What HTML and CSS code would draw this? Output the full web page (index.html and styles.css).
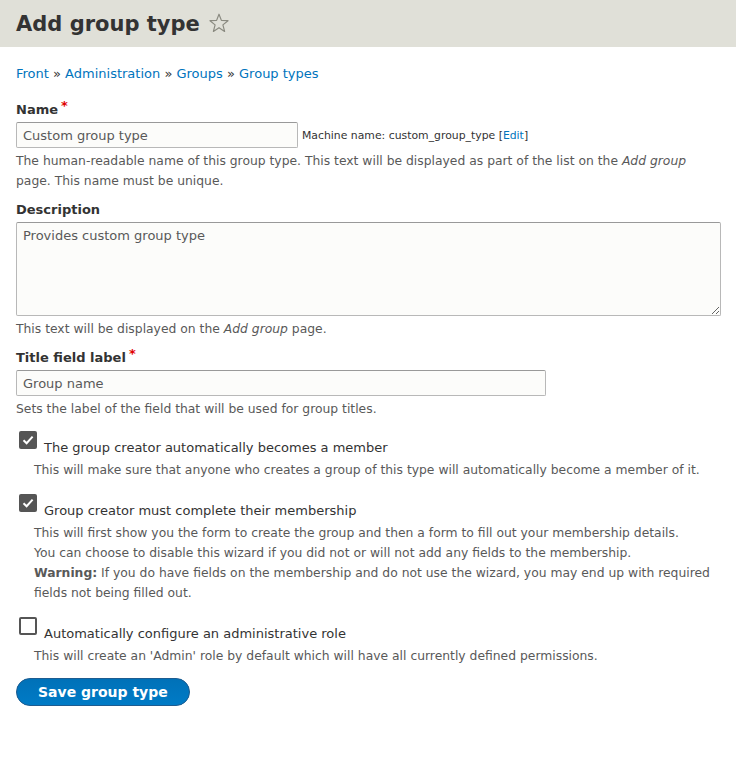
FILE: index.html
```html
<!DOCTYPE HTML>
<html lang="en">
  <head>
    <meta charset="utf-8" />
    <meta name="viewport" content="width=device-width, initial-scale=1.0" />
    <title>Add group type</title>
    <link rel="stylesheet" href="styles.css">
  </head>
  <body>
    <header class="page-header">
      <h1 class="page-title">Add group type</h1>
      <svg class="shortcut" width="22" height="22" viewBox="0 0 22 22">
        <path d="M11 2.2 L13.4 8.4 L20 8.7 L14.9 12.9 L16.6 19.4 L11 15.7 L5.4 19.4 L7.1 12.9 L2 8.7 L8.6 8.4 Z" fill="none" stroke="#8a8a80" stroke-width="1.2" stroke-linejoin="round"/>
      </svg>
    </header>

    <nav class="breadcrumb">
      <a href="#">Front</a> » <a href="#">Administration</a> » <a href="#">Groups</a> » <a href="#">Group types</a>
    </nav>

    <form class="group-type-form">
      <div class="form-item">
        <label class="form-label">Name<span class="required">*</span></label>
        <div class="field-row">
          <input class="form-text name-input" type="text" value="Custom group type">
          <span class="machine-name">Machine name: custom_group_type [<a href="#">Edit</a>]</span>
        </div>
        <div class="description">The human-readable name of this group type. This text will be displayed as part of the list on the <em>Add group</em> page. This name must be unique.</div>
      </div>

      <div class="form-item">
        <label class="form-label">Description</label>
        <textarea class="form-textarea">Provides custom group type</textarea>
        <div class="description">This text will be displayed on the <em>Add group</em> page.</div>
      </div>

      <div class="form-item">
        <label class="form-label">Title field label<span class="required">*</span></label>
        <input class="form-text title-input" type="text" value="Group name">
        <div class="description">Sets the label of the field that will be used for group titles.</div>
      </div>

      <div class="form-item checkbox-item">
        <div class="checkbox-row">
          <span class="checkbox checked">
            <svg width="18" height="18" viewBox="0 0 18 18"><path d="M4.5 9.2 L7.6 12.2 L13.6 5.6" fill="none" stroke="#ffffff" stroke-width="2"/></svg>
          </span>
          <label class="checkbox-label">The group creator automatically becomes a member</label>
        </div>
        <div class="description">This will make sure that anyone who creates a group of this type will automatically become a member of it.</div>
      </div>

      <div class="form-item checkbox-item">
        <div class="checkbox-row">
          <span class="checkbox checked">
            <svg width="18" height="18" viewBox="0 0 18 18"><path d="M4.5 9.2 L7.6 12.2 L13.6 5.6" fill="none" stroke="#ffffff" stroke-width="2"/></svg>
          </span>
          <label class="checkbox-label">Group creator must complete their membership</label>
        </div>
        <div class="description">This will first show you the form to create the group and then a form to fill out your membership details.<br>You can choose to disable this wizard if you did not or will not add any fields to the membership.<br><strong>Warning:</strong> If you do have fields on the membership and do not use the wizard, you may end up with required fields not being filled out.</div>
      </div>

      <div class="form-item checkbox-item">
        <div class="checkbox-row">
          <span class="checkbox"></span>
          <label class="checkbox-label">Automatically configure an administrative role</label>
        </div>
        <div class="description">This will create an 'Admin' role by default which will have all currently defined permissions.</div>
      </div>

      <button type="submit" class="button-primary">Save group type</button>
    </form>
  </body>
</html>
```

FILE: styles.css
```css
body {
  margin: 0;
  font-family: "DejaVu Sans", Verdana, sans-serif;
  font-size: 13px;
  line-height: 20px;
  color: #333333;
  background-color: #ffffff;
}
a {
  color: #0074bd;
  text-decoration: none;
}

.page-header {
  display: flex;
  align-items: center;
  height: 47px;
  box-sizing: border-box;
  padding: 0 16px;
  background-color: #e0e0d8;
}
.page-title {
  margin: 0;
  font-size: 21px;
  line-height: 30px;
  font-weight: bold;
  color: #333333;
}
.shortcut {
  margin-left: 8px;
  margin-top: -2px;
}

.breadcrumb {
  padding: 0 16px;
  margin-top: 17px;
}

.group-type-form {
  padding: 0 16px;
  margin-top: 16px;
}
.form-item {
  margin-bottom: 9px;
}
.form-label {
  display: block;
  font-weight: bold;
  margin-bottom: 2px;
}
.required {
  color: #e00000;
  margin-left: 3px;
  position: relative;
  top: -4px;
}
.field-row {
  display: flex;
  align-items: center;
}
.form-text {
  display: block;
  box-sizing: border-box;
  height: 26px;
  padding: 0 6px;
  font-family: "DejaVu Sans", Verdana, sans-serif;
  font-size: 13px;
  color: #595959;
  background-color: #fcfcfa;
  border: 1px solid #b8b8b8;
  border-top-color: #999999;
  border-radius: 2px;
}
.name-input {
  width: 282px;
}
.title-input {
  width: 530px;
}
.machine-name {
  margin-left: 4px;
  font-size: 10.85px;
  margin-top: 1px;
}
.form-textarea {
  display: block;
  box-sizing: border-box;
  width: 705px;
  height: 94px;
  padding: 3px 6px;
  font-family: "DejaVu Sans", Verdana, sans-serif;
  font-size: 13px;
  line-height: 20px;
  color: #595959;
  background-color: #fcfcfa;
  border: 1px solid #b8b8b8;
  border-top-color: #999999;
  border-radius: 2px;
}
.description {
  margin-top: 3px;
  font-size: 12.35px;
  color: #595959;
}

.checkbox-item {
  margin-top: 12px;
  margin-bottom: 0;
}
.checkbox-item + .checkbox-item {
  margin-top: 14px;
}
.checkbox-item .description {
  margin-top: 2px;
  padding-left: 18px;
}
.checkbox-row {
  display: flex;
  align-items: flex-start;
  padding-left: 3px;
}
.checkbox {
  display: block;
  box-sizing: border-box;
  width: 18px;
  height: 18px;
  border: 2px solid #555555;
  border-radius: 2px;
  background-color: #ffffff;
}
.checkbox.checked {
  border: none;
  background-color: #555555;
}
.checkbox svg {
  display: block;
}
.checkbox-label {
  margin-left: 7px;
  padding-top: 7px;
}

.button-primary {
  display: block;
  margin-top: 12px;
  height: 28px;
  padding: 0 21px;
  font-family: "DejaVu Sans", Verdana, sans-serif;
  font-size: 14px;
  font-weight: bold;
  color: #ffffff;
  background-color: #0071b8;
  background-image: linear-gradient(to top, #007bc6, #0071b8);
  border: 1px solid #1e5c90;
  border-radius: 20px;
}
```
